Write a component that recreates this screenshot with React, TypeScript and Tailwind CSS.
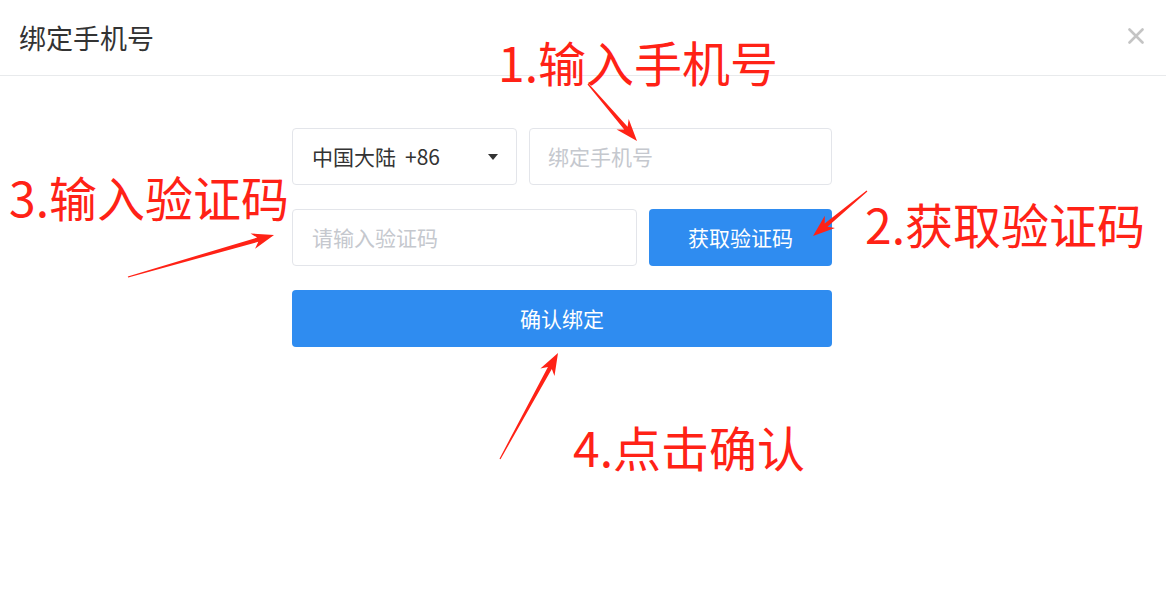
import React from 'react';

const font = { fontFamily: '"Noto Sans CJK SC", "Noto Sans", sans-serif' };

type Pt = [number, number];

// tapered red arrow like the ones drawn by screenshot tools
function arrowPoints(tail: Pt, tip: Pt) {
  const dx = tip[0] - tail[0];
  const dy = tip[1] - tail[1];
  const len = Math.hypot(dx, dy);
  const ux = dx / len;
  const uy = dy / len;
  const nx = -uy;
  const ny = ux;
  const head = 20;
  const bx = tip[0] - ux * head;
  const by = tip[1] - uy * head;
  const p = (x: number, y: number) => `${x.toFixed(1)},${y.toFixed(1)}`;
  return [
    p(tail[0] + nx * 0.6, tail[1] + ny * 0.6),
    p(bx + nx * 2.2 + ux * 3, by + ny * 2.2 + uy * 3),
    p(bx + nx * 8 - ux * 2, by + ny * 8 - uy * 2),
    p(tip[0], tip[1]),
    p(bx - nx * 8 - ux * 2, by - ny * 8 - uy * 2),
    p(bx - nx * 2.2 + ux * 3, by - ny * 2.2 + uy * 3),
    p(tail[0] - nx * 0.6, tail[1] - ny * 0.6),
  ].join(' ');
}

const arrows: [Pt, Pt][] = [
  [[588, 84], [637, 141]],
  [[867, 191], [813, 236]],
  [[128, 277], [274, 235]],
  [[500, 459], [558, 353]],
];

const labels = [
  { text: '1.输入手机号', className: 'left-[498px] top-[37px]' },
  { text: '3.输入验证码', className: 'left-[9px] top-[172px]' },
  { text: '2.获取验证码', className: 'left-[865px] top-[199px]' },
  { text: '4.点击确认', className: 'left-[573px] top-[422px]' },
];

export default function App() {
  return (
    <div className="relative w-[1166px] h-[614px] bg-white overflow-hidden" style={font}>
      <div className="flex items-center justify-between h-[76px] border-b border-[#e8eaec] pl-[19px] pr-[22px]">
        <span className="text-[27px] text-[#333333] leading-none">绑定手机号</span>
        <svg width="16" height="16" viewBox="0 0 16 16" className="mb-[3px]">
          <path d="M1.5 1.5 L14.5 14.5 M14.5 1.5 L1.5 14.5" stroke="#c4c4c4" strokeWidth="2.6" strokeLinecap="round" />
        </svg>
      </div>

      <div className="ml-[292px] mt-[52px] w-[540px] flex flex-col gap-[24px]">
        <div className="flex gap-[12px]">
          <div className="flex items-center justify-between w-[225px] h-[57px] border border-[#e3e5ea] rounded-[4px] pl-[19px] pr-[18px]">
            <span className="text-[21px] text-[#333333]">
              中国大陆<span className="ml-[9px]">+86</span>
            </span>
            <svg width="10" height="6" viewBox="0 0 10 6">
              <path d="M0 0 L10 0 L5 6 Z" fill="#333333" />
            </svg>
          </div>
          <div className="flex items-center flex-1 h-[57px] border border-[#e3e5ea] rounded-[4px] pl-[18px]">
            <span className="text-[21px] text-[#c5c8ce]">绑定手机号</span>
          </div>
        </div>

        <div className="flex gap-[12px]">
          <div className="flex items-center w-[345px] h-[57px] border border-[#e3e5ea] rounded-[4px] pl-[19px]">
            <span className="text-[21px] text-[#c5c8ce]">请输入验证码</span>
          </div>
          <div className="flex items-center justify-center flex-1 h-[57px] bg-[#2f8cf0] rounded-[4px]">
            <span className="text-[21px] text-white">获取验证码</span>
          </div>
        </div>

        <div className="flex items-center justify-center h-[57px] bg-[#2f8cf0] rounded-[4px]">
          <span className="text-[21px] text-white">确认绑定</span>
        </div>
      </div>

      <svg className="absolute inset-0 pointer-events-none" width="1166" height="614">
        {arrows.map(([a, b], i) => (
          <polygon key={i} points={arrowPoints(a, b)} fill="#ff2216" />
        ))}
      </svg>

      {labels.map((l) => (
        <div key={l.text} className={`absolute text-[48px] leading-none text-[#ff2216] whitespace-nowrap ${l.className}`}>
          {l.text}
        </div>
      ))}
    </div>
  );
}
